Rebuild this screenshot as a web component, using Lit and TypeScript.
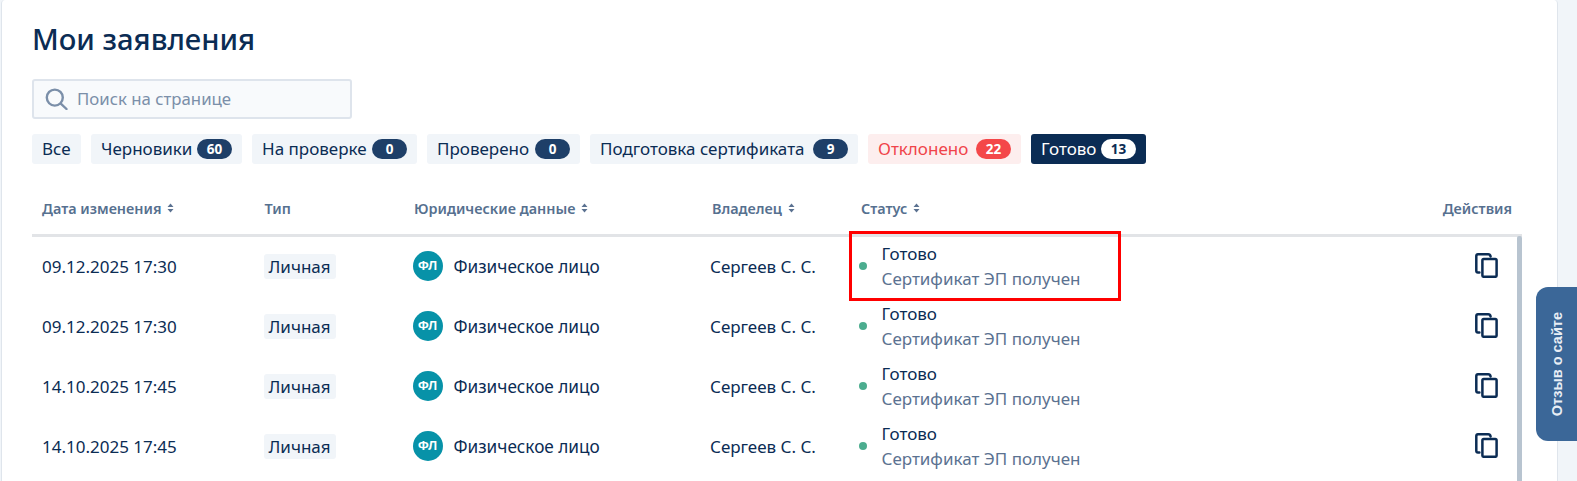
import { LitElement, html, css, svg } from "lit";
import { customElement } from "lit/decorators.js";
import { styleMap } from "lit/directives/style-map.js";

const rows = ["09.12.2025 17:30", "09.12.2025 17:30", "14.10.2025 17:45", "14.10.2025 17:45"];
const tabs: [string, string | null, string, number][] = [
  ["Все", null, "", 49],
  ["Черновики", "60", "", 151],
  ["На проверке", "0", "", 165],
  ["Проверено", "0", "", 153],
  ["Подготовка сертификата", "9", "", 268],
  ["Отклонено", "22", "red", 153],
  ["Готово", "13", "dark", 115],
];

const sort = html`<svg class="sort" width="7" height="10" viewBox="0 0 7 10"><path d="M3.5 0.5 6.5 4H.5zM3.5 9.5 .5 6h6z" fill="#5b7291"/></svg>`;
const copy = html`<svg class="copy" width="23" height="25" viewBox="0 0 23 25" fill="none" stroke="#0b2c54" stroke-width="2.5" stroke-linejoin="round" stroke-linecap="round">
  ${svg`<rect x="7.4" y="6" width="14.2" height="17.8" rx="1.4"/><path d="M4.4 19.6H3A1.8 1.8 0 0 1 1.3 17.8V3A1.8 1.8 0 0 1 3 1.3H13A2.6 2.6 0 0 1 15.6 3.4"/>`}
</svg>`;

@customElement("app-root")
export class AppRoot extends LitElement {
  static styles = css`
    :host { display: block; height: 481px; overflow: hidden; position: relative; background: #f1f5f9; font-family: "Noto Sans", sans-serif; color: #0b2c54; }
    .card { margin-left: 1px; width: 1557px; height: 520px; box-sizing: border-box; background: #fff; border: 1px solid #dfe5ec; border-top: none; border-radius: 4px 4px 0 0; padding: 0 34px 0 30px; }
    h1 { margin: 0; padding-top: 21px; height: 79px; box-sizing: border-box; font-size: 29.2px; line-height: 36px; font-weight: 500; color: #0b2c54; }
    .search { width: 320px; height: 40px; box-sizing: border-box; border: 2px solid #dee4ec; border-radius: 3px; background: #f8fafc; display: flex; align-items: center; gap: 9px; padding-left: 11px; color: #7b8fa9; font-size: 16.8px; }
    .search span { padding-bottom: 2px; }
    .tabs { display: flex; gap: 10px; margin-top: 15px; }
    .tab { height: 30px; box-sizing: border-box; padding: 0 10px 0; background: #f1f5f9; border-radius: 3px; display: flex; align-items: center; justify-content: space-between; font-size: 17px; white-space: nowrap; }
    .tab span { padding-bottom: 2px; }
    .tab b { width: 35px; height: 20px; box-sizing: border-box; border-radius: 10px; background: #1e3f68; color: #fff; font-size: 13.5px; font-weight: 700; display: flex; align-items: center; justify-content: center; }
    .tab.red { background: #fdeeee; color: #f0444a; }
    .tab.red b { background: #f44749; }
    .tab.dark { background: #0b2c54; color: #fff; }
    .tab.dark b { background: #fff; color: #0b2c54; }
    .table { position: relative; width: 1490px; }
    .head { display: grid; grid-template-columns: 222.5px 149.5px 298px 149px 1fr 100px; height: 70px; border-bottom: 3px solid #e2e4e7; font-size: 14.4px; font-weight: 600; color: #56708f; align-items: center; }
    .head > div { display: flex; align-items: center; gap: 6px; padding-left: 10px; padding-top: 18px; white-space: nowrap; }
    .head > div.a { justify-content: flex-end; padding-right: 10px; padding-left: 0; }
    .row { display: grid; grid-template-columns: 221.5px 149px 297.5px 148.5px 1fr 100px; align-items: center; height: 60px; box-sizing: border-box; padding-bottom: 2px; }
    .body { font-size: 17px; }
    .cell { padding-left: 10px; white-space: nowrap; }
    .tag { display: inline-block; background: #f1f5f9; border-radius: 3px; padding: 0 5px; height: 25px; line-height: 25px; }
    .legal { display: flex; align-items: center; gap: 11px; }
    .legal span + span { font-size: 17.2px; }
    .fl { width: 30px; height: 30px; border-radius: 50%; background: #0792a8; color: #fff; font: 700 12.5px/30px "Liberation Sans", sans-serif; text-align: center; }
    .status { display: flex; align-items: center; gap: 15px; padding-left: 10px; }
    .dot { width: 8px; height: 8px; border-radius: 50%; background: #4cad8f; flex: none; }
    .st { line-height: 25px; }
    .st small { display: block; font-size: 17px; color: #5b7291; }
    .act { display: flex; justify-content: flex-end; padding-right: 24px; padding-bottom: 1px; }
    .scroll { position: absolute; right: 0; top: 72px; width: 5px; height: 300px; background: #b8c4d0; border-radius: 2px 2px 0 0; }
    .mark { position: absolute; left: 816.5px; top: 67px; width: 272px; height: 70px; box-sizing: border-box; border: 3px solid #ff0000; pointer-events: none; }
    .feedback { position: absolute; left: 1536px; top: 287px; width: 41px; height: 154px; box-sizing: border-box; background: #3b6798; border-radius: 12px 0 0 12px; color: #e8eef5; font: 700 14.5px "Liberation Sans", sans-serif; display: flex; align-items: center; justify-content: center; }
    .feedback span { writing-mode: vertical-rl; transform: rotate(180deg); }
  `;

  render() {
    return html`
      <div class="card">
        <h1>Мои заявления</h1>
        <div class="search">
          <svg width="23" height="22" viewBox="0 0 23 22" fill="none" stroke="#7b8fa9" stroke-width="2.4" stroke-linecap="round"><circle cx="9.8" cy="9.6" r="8"/><path d="M15.8 15.6 21.5 21"/></svg>
          <span>Поиск на странице</span>
        </div>
        <div class="tabs">
          ${tabs.map(([t, n, c, w]) => html`<div class="tab ${c}" style=${styleMap({ width: `${w}px` })}><span>${t}</span>${n !== null ? html`<b>${n}</b>` : ""}</div>`)}
        </div>
        <div class="table">
          <div class="head">
            <div>Дата изменения ${sort}</div>
            <div>Тип</div>
            <div>Юридические данные ${sort}</div>
            <div>Владелец ${sort}</div>
            <div>Статус ${sort}</div>
            <div class="a">Действия</div>
          </div>
          ${rows.map((d) => html`
            <div class="row body">
              <div class="cell">${d}</div>
              <div class="cell"><span class="tag">Личная</span></div>
              <div class="cell legal"><span class="fl">ФЛ</span><span>Физическое лицо</span></div>
              <div class="cell">Сергеев С. С.</div>
              <div class="cell status"><span class="dot"></span><div class="st">Готово<small>Сертификат ЭП получен</small></div></div>
              <div class="act">${copy}</div>
            </div>`)}
          <div class="scroll"></div>
          <div class="mark"></div>
        </div>
      </div>
      <div class="feedback"><span>Отзыв о сайте</span></div>
    `;
  }
}
